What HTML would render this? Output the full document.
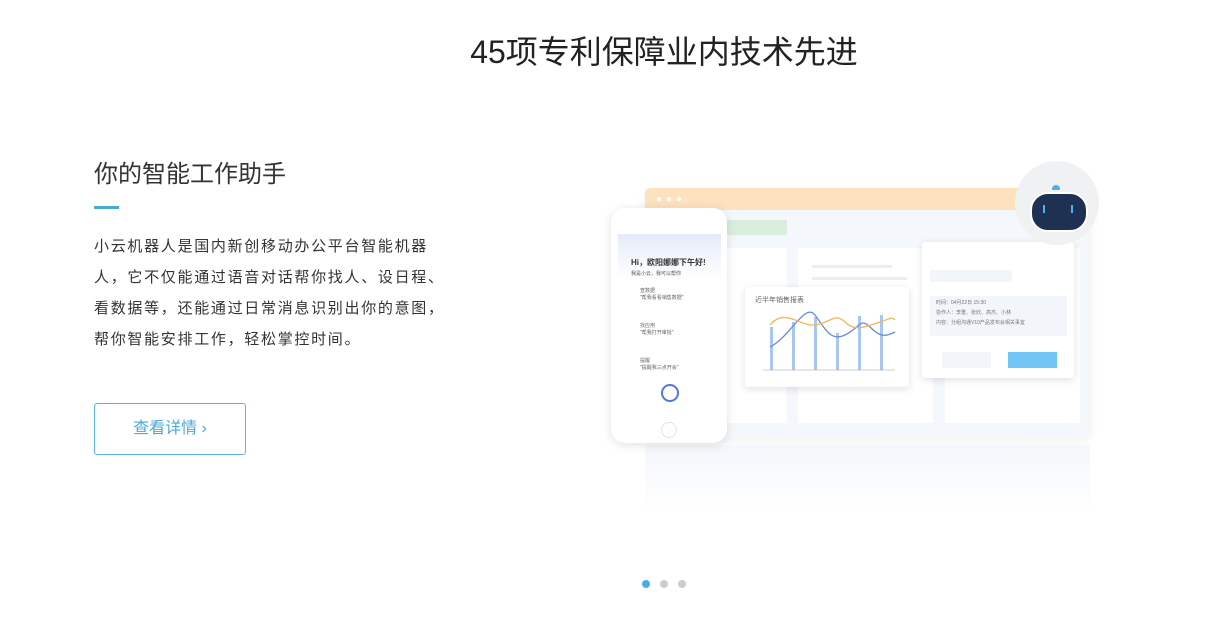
<!DOCTYPE html>
<html><head><meta charset="utf-8"><style>
body{margin:0;width:1232px;height:625px;background:#fff;position:relative;overflow:hidden;font-family:"Liberation Sans","Noto Sans CJK SC",sans-serif;color:#333}
.a{position:absolute}
h1{position:absolute;left:0;width:1328px;top:27px;margin:0;text-align:center;font-weight:400;font-size:32px;color:#222}
.t{left:94px;top:154px;font-size:24px;color:#333}
.p{left:94px;top:231px;white-space:nowrap;font-size:15px;letter-spacing:1.7px;line-height:31px;color:#333}
.btn{left:94px;top:403px;width:150px;height:50px;border:1px solid #5bb4dc;border-radius:3px;color:#4aa9d6;font-size:16px;text-align:center;line-height:50px}
.card{background:#fff;box-shadow:0 2px 8px rgba(0,0,0,.12);border-radius:3px}
.ln{background:#e9eef5;height:3px}
.dot{width:8px;height:8px;border-radius:50%;top:580px;background:#ccc}
</style></head><body>
<h1>45项专利保障业内技术先进</h1>
<div class="a t">你的智能工作助手</div>
<div class="a" style="left:94px;top:206px;width:25px;height:3px;background:#4aa9d6"></div>
<div class="a p">小云机器人是国内新创移动办公平台智能机器<br>人，它不仅能通过语音对话帮你找人、设日程、<br>看数据等，还能通过日常消息识别出你的意图，<br>帮你智能安排工作，轻松掌控时间。</div>
<div class="a btn">查看详情 ›</div>

<div class="a" style="left:645px;top:188px;width:445px;height:250px;background:#f4f7fb;border-radius:6px;box-shadow:0 3px 10px rgba(0,0,0,.06)"></div>
<div class="a" style="left:645px;top:188px;width:445px;height:22px;background:#fde2bf;border-radius:6px 6px 0 0"></div>
<div class="a" style="left:657px;top:197px;width:4px;height:4px;border-radius:50%;background:#fff;box-shadow:10px 0 #fff,20px 0 #fff"></div>
<div class="a" style="left:727px;top:220px;width:60px;height:15px;background:#d9eedd"></div>
<div class="a" style="left:727px;top:248px;width:60px;height:175px;background:#fff"></div>
<div class="a" style="left:798px;top:248px;width:135px;height:175px;background:#fff"></div>
<div class="a" style="left:945px;top:248px;width:135px;height:175px;background:#fff"></div>
<div class="a ln" style="left:812px;top:265px;width:80px"></div>
<div class="a ln" style="left:812px;top:277px;width:95px"></div>
<div class="a" style="left:645px;top:445px;width:445px;height:70px;background:linear-gradient(#f4f7fb,#fff)"></div>

<div class="a" style="left:611px;top:208px;width:116px;height:235px;background:#fff;border-radius:14px;box-shadow:0 2px 10px rgba(0,0,0,.12)"></div>
<div class="a" style="left:618px;top:234px;width:103px;height:45px;background:linear-gradient(#e6ebf8,#fff)"></div>
<div class="a" style="left:631px;top:257px;font-size:8px;font-weight:bold;color:#333">Hi，欧阳娜娜下午好!</div>
<div class="a" style="left:631px;top:270px;font-size:5px;color:#555">我是小云，我可以帮你</div>
<div class="a" style="left:640px;top:288px;font-size:5px;line-height:7px;color:#666">查数据<br>"帮我看看销售数据"<br><br><br><br>找应用<br>"帮我打开审批"<br><br><br><br>提醒<br>"提醒我三点开会"</div>
<div class="a" style="left:661px;top:384px;width:14px;height:14px;border:2px solid #5675e0;border-radius:50%"></div>
<div class="a" style="left:661px;top:422px;width:14px;height:14px;border:1px solid #e3e3e3;border-radius:50%"></div>

<div class="a card" style="left:745px;top:287px;width:164px;height:100px"></div>
<div class="a" style="left:755px;top:295px;font-size:7px;color:#666">近半年销售报表</div>
<svg class="a" style="left:745px;top:287px" width="164" height="100">
<g fill="#a8c6f2"><rect x="25" y="40" width="3" height="43"/><rect x="47" y="35" width="3" height="48"/><rect x="69" y="30" width="3" height="53"/><rect x="91" y="46" width="3" height="37"/><rect x="113" y="29" width="3" height="54"/><rect x="135" y="28" width="3" height="55"/></g>
<line x1="18" y1="83" x2="150" y2="83" stroke="#999" stroke-width=".6"/>
<path d="M25 60 C45 50,60 15,70 28 S85 55,100 48 S115 30,125 40 S140 50,150 45" fill="none" stroke="#6a8bd8" stroke-width="1.3"/>
<path d="M25 38 C40 20,55 40,70 38 S90 25,100 35 S120 40,135 35 S145 30,150 33" fill="none" stroke="#f3b55a" stroke-width="1.3"/>
</svg>

<div class="a card" style="left:922px;top:242px;width:152px;height:136px"></div>
<div class="a" style="left:930px;top:270px;width:82px;height:12px;background:#f2f5fa"></div>
<div class="a" style="left:930px;top:296px;width:137px;height:40px;background:#f2f5fa;font-size:5px;line-height:10px;color:#777;padding:2px 6px;box-sizing:border-box">时间：04月22日 15:30<br>协作人：李重、张欣、高杰、小林<br>内容：分组沟通V10产品发布会相关事宜</div>
<div class="a" style="left:942px;top:352px;width:49px;height:16px;background:#f2f5fa"></div>
<div class="a" style="left:1008px;top:352px;width:49px;height:16px;background:#70c5f5"></div>

<div class="a" style="left:1015px;top:161px;width:84px;height:84px;border-radius:50%;background:#f0f1f3"></div>
<div class="a" style="left:1030px;top:192px;width:54px;height:36px;border-radius:18px;background:#1f3152;border:2px solid #fff"></div>
<div class="a" style="left:1043px;top:205px;width:2px;height:8px;background:#4ab0f0;box-shadow:28px 0 #4ab0f0"></div>
<div class="a" style="left:1052px;top:185px;width:8px;height:5px;border-radius:4px 4px 0 0;background:#4ab0f0"></div>

<div class="a dot" style="left:642px;background:#45aee6"></div>
<div class="a dot" style="left:660px"></div>
<div class="a dot" style="left:678px"></div>
</body></html>
